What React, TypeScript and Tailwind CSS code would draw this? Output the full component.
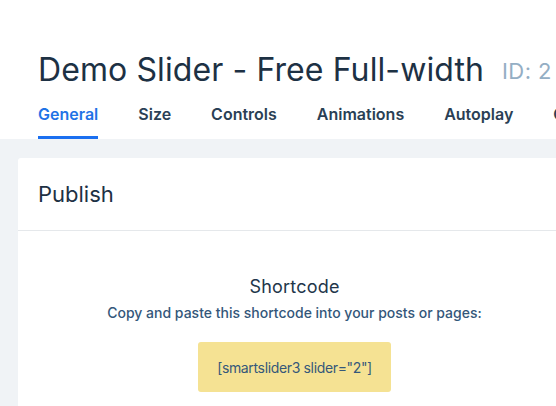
import React from "react";

const tabs = ["General", "Size", "Controls", "Animations", "Autoplay", "Optimize"];

export default function App() {
  return (
    <div className="w-[556px] h-[406px] overflow-hidden bg-white" style={{ fontFamily: "Inter, 'Noto Sans', sans-serif" }}>
      <div className="w-[589px]">
        <div className="px-[38px] pt-[51px]">
          <div className="flex items-center gap-[18px] h-[38px]">
            <h1 className="text-[32px] leading-[38px] text-[#1d3144] whitespace-nowrap" style={{ letterSpacing: "0.1px" }}>
              Demo Slider - Free Full-width
            </h1>
            <span className="text-[22px] leading-[26px] mt-[2px] text-[#94aec4] whitespace-nowrap" style={{ letterSpacing: "0.4px" }}>
              ID: 2
            </span>
          </div>
          <div className="flex gap-[40px] mt-[15px] text-[16px] leading-[20px] font-semibold whitespace-nowrap">
            {tabs.map((t, i) => (
              <div
                key={t}
                className={`pb-[12px] border-b-[3px] ${
                  i === 0 ? "text-[#1f73e6] border-[#1a6ff0]" : "text-[#2a3f55] border-transparent"
                }`}
              >
                {t}
              </div>
            ))}
          </div>
        </div>
        <div className="bg-[#f0f3f6] px-[18px] pt-[19px] pb-[40px]">
          <div className="bg-white rounded-t-[3px]">
            <div className="px-[20px] h-[73px] flex items-center border-b border-[#e5e8eb]">
              <h2 className="text-[22px] text-[#1d3144]">Publish</h2>
            </div>
            <div className="flex flex-col items-center pt-[44px] pb-[30px]">
              <div className="text-[18px] leading-[24px] text-[#22364a]" style={{ letterSpacing: "0.2px" }}>
                Shortcode
              </div>
              <div className="mt-[4px] text-[14px] leading-[20px] font-medium text-[#34577a]">
                Copy and paste this shortcode into your posts or pages:
              </div>
              <div className="mt-[19px] w-[193px] h-[50px] rounded-[3px] bg-[#f5e293] flex items-center justify-center text-[14px] text-[#35587a]" style={{ letterSpacing: "-0.35px" }}>
                [smartslider3 slider="2"]
              </div>
            </div>
          </div>
        </div>
      </div>
    </div>
  );
}
